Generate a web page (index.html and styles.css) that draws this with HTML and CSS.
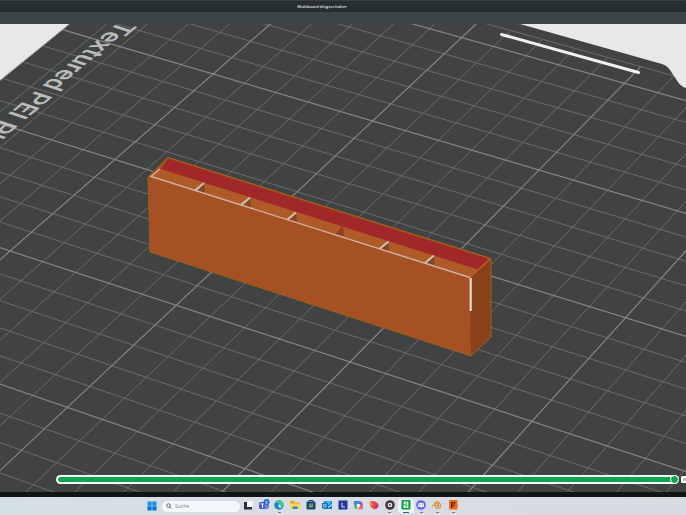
FILE: index.html
```html
<!DOCTYPE html>
<html lang="de">
<head>
<meta charset="utf-8">
<title>Multiboard dingscs halter</title>
<link rel="stylesheet" href="styles.css">
</head>
<body>
<header class="titlebar"><h1 class="title">Multiboard dingscs halter</h1></header>
<div class="toolbar"></div>
<main class="viewport">
  <svg class="scene" viewBox="0 24 686 468" preserveAspectRatio="xMidYMid slice" role="img" aria-label="Druckplatte mit Modell">
    <rect class="plate" x="-400" y="-400" width="1500" height="1400"/>
    <path id="minor" class="minor"/>
    <path id="major" class="major"/>
    <path class="backdrop" d="M-400 24H69.500L0 80.500L-400 410Z"/>
    <path class="plate-rim" d="M69.500 24L0 80.500"/>
    <path class="backdrop" d="M520 24L662 64Q667 65.500 670 70L678 82Q681 87 688 88.500H1100V-400H520Z"/>
    <path class="notch" d="M501.500 34.500L638.500 72.500"/>
    <text class="plate-text" transform="matrix(-.77 .638 -.95 -.31 120 21)">Textured PEI Pl</text>

    <path class="side" d="M470 277L491 258V337L471 356Z"/>
    <path class="front" d="M148 177L168 157L491 258L470 278L471 356L150 252Z"/>
    <path class="inner" d="M150 177L161 169L478 269L470 277Z"/>
    <path class="back" d="M168 158.500L489.500 259L478 269.500L161 169Z"/>
    <g class="shade">
      <path d="M198 191L204 183L205 192.500Z"/>
      <path d="M244 206L250 197L251 207.500Z"/>
      <path d="M290 220L296 212L297 221.500Z"/>
      <path d="M336 234L343 226L344 236Z"/>
      <path d="M382 249L388 241L389 250.500Z"/>
      <path d="M427 263L434 255L435 265Z"/>
    </g>
    <path class="outline" d="M148 177L168 157.500L491 258.500V337L471 356L150 252Z"/>
    <path class="rim" d="M160 169L151 176.500L470 277.500"/>
    <path class="rim-end" d="M470 277.500L490 259"/>
    <path class="rib" d="M195 190.500L204 183M241 205L250 197.500M287.500 219.500L296 212.500M380 248.500L388.500 241.500M425 263L434 255.500"/>
    <path class="rib-red" d="M337 233L343 227"/>
    <path class="seam" d="M470.700 278V311"/>
  </svg>
  <div class="timeline">
    <input class="range" type="range" min="0" max="100" value="100" aria-label="Druckfortschritt">
    <span class="badge"></span>
  </div>
</main>
<footer class="taskbar">
  <button class="start" aria-label="Start">
    <svg viewBox="0 0 10 10"><path fill="#1593e6" d="M.5.500h4.200v4.200H.5zM5.300.500h4.200v4.200H5.300z"/><path fill="#0878cf" d="M.5 5.300h4.200v4.200H.5zM5.300 5.300h4.200v4.200H5.300z"/></svg>
  </button>
  <label class="search">
    <svg viewBox="0 0 8 8"><circle cx="3.400" cy="3.400" r="2.400"/><path d="M5.200 5.200L7.300 7.300"/></svg>
    <input type="search" placeholder="Suche" aria-label="Suche">
  </label>
  <nav class="apps" aria-label="Programme">
    <button aria-label="Taskansicht"><svg viewBox="0 0 12 12"><path fill="#fafafa" d="M5 2h6v6H5z"/><path fill="#2c2f33" d="M2 3h3v5h5v2.500H2z"/></svg></button>
    <button aria-label="Teams"><svg viewBox="0 0 12 12"><rect x="1" y="3" width="7" height="7" rx="1.500" fill="#5558c4"/><path fill="#7b83eb" d="M7 5h4v3q-1 3-4 2z"/><path fill="#fff" d="M2.500 4.500h4v1H5v3.500H4V5.500H2.500z"/><circle cx="8.500" cy="3" r="3" fill="#1473c8"/><path stroke="#b9dcf7" fill="none" stroke-width=".8" d="M7.500 2.500q1-1 1.700 0Q9 3.500 7.600 4.200h2"/></svg></button>
    <button class="open" aria-label="Edge"><svg viewBox="0 0 12 12"><circle cx="6" cy="6" r="4.700" fill="#1581cf"/><path fill="#43c98a" d="M2 4Q4 .500 8 1.700Q11.500 3.500 10.500 7Q8 8.500 7 6.500Q7 3.500 2 4Z"/><path fill="#d9f1f4" d="M5.500 5.500Q6.500 4.800 7 6.300Q7 7.600 9.500 8Q7 9.500 5.500 8Z"/></svg></button>
    <button aria-label="Explorer"><svg viewBox="0 0 12 12"><path fill="#e8a912" d="M1 2h4l1 1.500h5V9H1z"/><path fill="#ffd557" d="M1 4.500h10V10H1z"/><path fill="#2585d5" d="M3.500 7.500h5V10h-5z"/></svg></button>
    <button aria-label="Store"><svg viewBox="0 0 12 12"><rect x="1.500" y="2.500" width="9" height="8" rx="1" fill="#17496f"/><path fill="none" stroke="#17496f" d="M4 3V1.500h4V3"/><path fill="#35b0d6" d="M4 4.500h1.800v1.800H4z"/><path fill="#7ab83e" d="M6.200 4.500H8v1.800H6.200z"/><path fill="#d9a73a" d="M4 6.700h4v1.500H4z"/></svg></button>
    <button aria-label="Outlook"><svg viewBox="0 0 12 12"><path fill="#1683d4" d="M3 2h8v8H3z"/><path fill="#41bdf0" d="M4 2.500h7L7.500 6z"/><rect x="1" y="4" width="5.500" height="5.500" fill="#0960ad"/><circle cx="3.700" cy="6.700" r="1.500" fill="none" stroke="#fff" stroke-width=".8"/><path fill="#fff" d="M7 8l4-3v1L7 9z"/></svg></button>
    <button aria-label="L"><svg viewBox="0 0 12 12"><path fill="#21379b" d="M1.500 1.500h9v9h-9z"/><path fill="none" stroke="#e8ebff" d="M5 3.500V8h3"/></svg></button>
    <button aria-label="Copilot"><svg viewBox="0 0 12 12"><path fill="#2f8ee0" d="M2 2h5l2 4H3Q1 5 2 2Z"/><path fill="#8b50ce" d="M7 2q3 0 4 4l-2 2z"/><path fill="#e36580" d="M9 5.500l2 1v3l-2 1H6z"/><path fill="#55ad59" d="M2 6h4L5 10q-3 0-3-4Z"/><path fill="#f2eff7" d="M5 5h3L7 8H4.500z"/></svg></button>
    <button aria-label="Firefox"><svg viewBox="0 0 12 12"><path fill="#ef4345" d="M1.500 3L4 2q4 0 6.500 3Q11 9 7.500 10.300Q2 10 1.500 3Z"/><path fill="#f59a2c" d="M2 2.500L5 5l-1 2Q1.500 6 2 2.500Z"/><path fill="#b13598" d="M7 6l3-1q.5 4-2.500 4.500Z"/></svg></button>
    <button class="open" aria-label="Player"><svg viewBox="0 0 12 12"><circle cx="6" cy="6" r="4.800" fill="#40353a"/><circle cx="6" cy="6" r="2.300" fill="#f4eeee"/><path fill="#40353a" d="M5.200 4.700L7.500 6L5.200 7.300z"/></svg></button>
    <button class="open active" aria-label="Bambu Studio"><svg viewBox="0 0 12 12"><rect x="1.500" y="1" width="9" height="9.500" rx="1" fill="#0ca244"/><path fill="#f5fff8" d="M3.700 2.500h4.600v6.500H3.700z"/><path fill="#0ca244" d="M5.600 2.500h.8V9h-.8zM3.700 5l4.600 1v.8L3.700 5.800z"/></svg></button>
    <button class="open" aria-label="Discord"><svg viewBox="0 0 12 12"><circle cx="6" cy="6" r="4.800" fill="#6268e8"/><path fill="#f2f2ff" d="M3.500 4.300q2.500-1 5 0L9.200 7.500Q6 8.800 2.800 7.500Z"/><path fill="#6268e8" d="M4.300 5.500h1v1h-1zM6.700 5.500h1v1h-1z"/></svg></button>
    <button class="open" aria-label="Blender"><svg viewBox="0 0 12 12"><path fill="none" stroke="#e39a3f" stroke-width="1.300" d="M1 7.500L6 3.500L3 3.500M6 2l3 2.500"/><circle cx="7" cy="6.800" r="3.200" fill="#e39a3f"/><circle cx="7.200" cy="6.600" r="1.800" fill="#eee"/><circle cx="7.200" cy="6.600" r="1" fill="#326ca9"/></svg></button>
    <button class="open" aria-label="Fusion"><svg viewBox="0 0 12 12"><rect x="2" y="1" width="8.500" height="9.500" rx="1" fill="#f0690e"/><path fill="#6b2d0d" d="M4 3h4.500v1.500h-3v1h2V7h-2v2H4z"/></svg></button>
  </nav>
</footer>
<script src="grid.js"></script>
</body>
</html>
```
FILE: styles.css
```css
* { box-sizing: border-box; }
body {
  margin: 0;
  height: 100vh;
  display: flex;
  flex-direction: column;
  overflow: hidden;
  font-family: "Open Sans", "Noto Sans", sans-serif;
  background: #414342;
}
button { border: 0; padding: 0; background: none; }
svg { display: block; }

.titlebar {
  height: 12px;
  flex: none;
  display: flex;
  align-items: center;
  justify-content: center;
  padding-right: 42px;
  background: #262e30;
  border-top: 1px solid #354144;
}
.title {
  margin: 0;
  font-size: 4px;
  line-height: 8px;
  font-weight: 600;
  color: #e2e5e6;
}
.toolbar { height: 12px; flex: none; background: #3b4546; }

.viewport {
  flex: 1;
  min-height: 0;
  position: relative;
  border-bottom: 5px solid #131616;
}
.scene { width: 100%; height: 100%; }
.plate { fill: #414342; }
.backdrop { fill: #e8e8e8; }
.plate-rim { stroke: #9b9c9b; fill: none; }
.minor, .major { fill: none; stroke: #6a6c6b; stroke-width: 1; }
.major { stroke: #858786; stroke-width: 1.200; }
.notch { stroke: #f1f1f1; stroke-width: 3; stroke-linecap: round; }
.plate-text { font: 500 26px Roboto, sans-serif; fill: #b9baba; }
.front { fill: #a65124; }
.side { fill: #884119; }
.inner { fill: #b05a28; }
.back { fill: #a12829; }
.shade { fill: #844626; }
.outline { fill: none; stroke: #9c601c; }
.rim { fill: none; stroke: #cbb4a5; stroke-width: 1.400; }
.rim-end { stroke: #b9622f; stroke-width: 1.200; }
.rib { stroke: #cdc0b6; stroke-width: 2; }
.rib-red { stroke: #b12d2c; stroke-width: 1.500; }
.seam { stroke: #eee5df; stroke-width: 2; }

.timeline {
  position: absolute;
  left: 56px;
  right: 0;
  bottom: 8px;
  display: flex;
  align-items: center;
  gap: 2px;
}
.range {
  appearance: none;
  flex: 1;
  min-width: 0;
  height: 9px;
  margin: 0;
  border: 2px solid #fff;
  border-right: 0;
  border-radius: 5px;
  background: #0ea64b;
}
.range::-webkit-slider-thumb {
  appearance: none;
  width: 9px;
  height: 9px;
  border: 1px solid #fff;
  border-radius: 50%;
  background: #0ea64b;
}
.badge {
  width: 5px;
  height: 7px;
  border: 2px solid #fff;
  border-right: 0;
  border-radius: 2px 0 0 2px;
  background: #b9c2bd;
}

.taskbar {
  height: 18px;
  flex: none;
  display: flex;
  align-items: center;
  padding-left: 147px;
  background: linear-gradient(90deg, #d3dfe6, #d9dde5 40%, #d7dae1);
}
.start { width: 11px; height: 11px; margin-right: 4px; }
.start svg { width: 10px; height: 10px; }
.search {
  width: 78px;
  height: 11px;
  display: flex;
  align-items: center;
  gap: 3px;
  padding: 0 4px;
  border-radius: 6px;
  background: #f3f6fa;
}
.search svg { width: 6px; height: 6px; flex: none; fill: none; stroke: #33383d; }
.search input {
  width: 100%;
  min-width: 0;
  border: 0;
  padding: 0;
  outline: 0;
  background: none;
  font: 5px/8px "Open Sans", sans-serif;
}
.search input::placeholder { color: #777c82; }
.apps { display: flex; width: 221px; }
.apps button {
  flex: 1;
  height: 14px;
  display: flex;
  flex-direction: column;
  align-items: center;
  gap: 1px;
  border-radius: 2px;
}
.apps svg { width: 12px; height: 12px; }
.apps .open::after { content: ""; width: 3px; height: 1px; background: #777e88; }
.apps .active { background: #eef3f4; }
.apps .active::after { width: 6px; background: #17699b; }
```
FILE: grid.js
```js
// Projects the build plate grid into the view. Ten cells span one unit.
function project(s, t) {
  const w = 1 - 0.0411 * s - 0.064 * t;
  const x = (213 + 303.84 * s - 203.64 * t) / w;
  const y = (74 + 89.01 * s + 160.93 * t) / w;
  return x.toFixed(1) + " " + y.toFixed(1);
}

const sMin = -5, sMax = 34, tMin = -6, tMax = 30;
const paths = { minor: "", major: "" };

function addLine(index, from, to) {
  const key = index % 5 === 0 ? "major" : "minor";
  paths[key] += "M" + from + "L" + to;
}

for (let s = sMin; s <= sMax; s++) {
  addLine(s, project(s / 10, tMin / 10), project(s / 10, tMax / 10));
}
for (let t = tMin; t <= tMax; t++) {
  addLine(t, project(sMin / 10, t / 10), project(sMax / 10, t / 10));
}

document.getElementById("minor").setAttribute("d", paths.minor);
document.getElementById("major").setAttribute("d", paths.major);
```
